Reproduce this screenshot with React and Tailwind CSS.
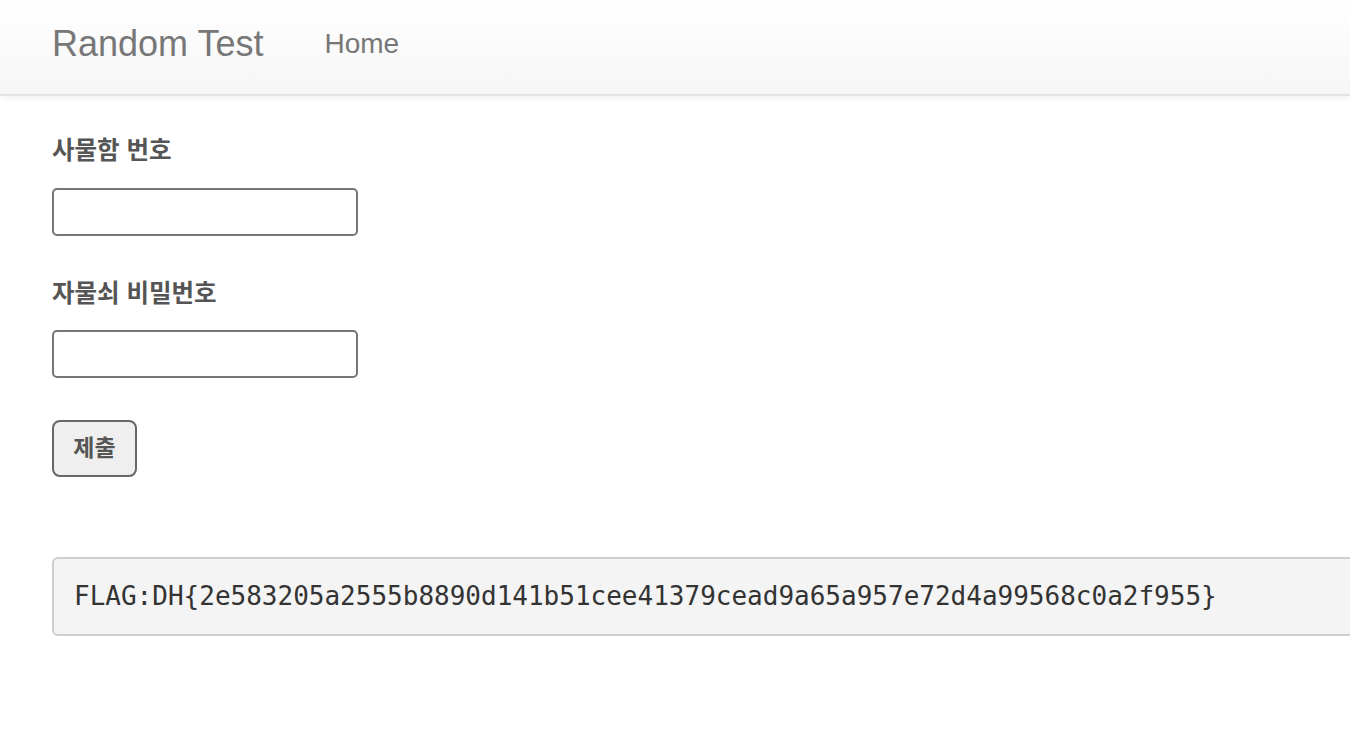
export default function App() {
  const sans = { fontFamily: '"Liberation Sans", Arial, sans-serif' };
  const kr = { fontFamily: '"Liberation Sans", "Noto Sans CJK KR", sans-serif' };
  return (
    <div className="w-[1350px] h-[754px] overflow-hidden bg-white" style={sans}>
      <nav className="h-[96px] bg-gradient-to-b from-white to-[#f6f6f6] border-b-2 border-[#e3e3e3] shadow-[0_2px_6px_rgba(0,0,0,0.06)] flex items-center pl-[52px]">
        <span className="text-[36px] text-[#777] leading-none mt-[-6px]">Random Test</span>
        <span className="text-[28px] text-[#777] leading-none ml-[61px] mt-[-6px]">Home</span>
      </nav>
      <div className="pl-[52px] pt-[39px]" style={kr}>
        <div className="text-[24.5px] font-bold text-[#555] leading-[32px]">사물함 번호</div>
        <input className="mt-[21px] block w-[306px] h-[48px] border-2 border-[#767676] rounded-[5px] bg-white" />
        <div className="mt-[42px] text-[24.5px] font-bold text-[#555] leading-[32px]">자물쇠 비밀번호</div>
        <input className="mt-[20px] block w-[306px] h-[48px] border-2 border-[#767676] rounded-[5px] bg-white" />
        <button className="mt-[42px] block w-[85px] h-[57px] border-2 border-[#676767] rounded-[8px] bg-[#efefef] text-[23px] font-bold text-[#555]">
          제출
        </button>
        <div
          className="mt-[80px] w-[1340px] h-[79px] bg-[#f4f4f4] border-2 border-[#cfcfcf] rounded-[6px] flex items-center pl-[20px] text-[26px] text-[#333]"
          style={{ fontFamily: '"DejaVu Sans Mono", "Liberation Mono", monospace' }}
        >
          FLAG:DH{"{"}2e583205a2555b8890d141b51cee41379cead9a65a957e72d4a99568c0a2f955{"}"}
        </div>
      </div>
    </div>
  );
}
